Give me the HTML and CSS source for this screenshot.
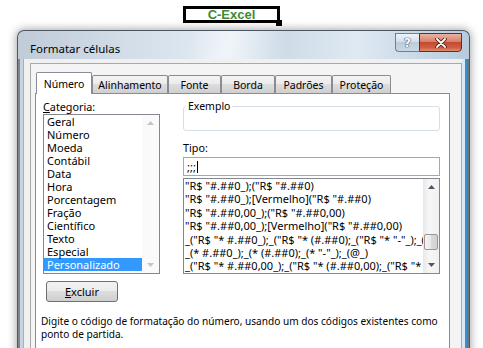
FILE: index.html
```html
<!DOCTYPE html>
<html lang="pt-BR">

<head>
    <meta charset="UTF-8">
    <meta name="viewport" content="width=device-width, initial-scale=1.0">
    <title>C-Excel - Formatar células</title>
    <link rel="stylesheet" href="styles.css">
</head>

<body>
    <div class="cell-ref">C-Excel<span class="handle"></span></div>

    <div class="window">
        <div class="titlebar">
            <span class="title">Formatar células</span>
            <div class="caption-btns">
                <button class="cap-btn help"><span>?</span></button>
                <button class="cap-btn close">
                    <svg width="12" height="10" viewBox="0 0 12 10">
                        <path d="M2 1 L10 9 M10 1 L2 9" stroke="#5a1a10" stroke-width="3.6" stroke-linecap="round" fill="none" />
                        <path d="M2 1 L10 9 M10 1 L2 9" stroke="#fff" stroke-width="1.8" stroke-linecap="round" fill="none" />
                    </svg>
                </button>
            </div>
        </div>

        <div class="client">
            <div class="sheet">
                <div class="tabs">
                    <div class="tab active" style="width: 56px">Número</div>
                    <div class="tab" style="width: 76px">Alinhamento</div>
                    <div class="tab" style="width: 53px">Fonte</div>
                    <div class="tab" style="width: 54px">Borda</div>
                    <div class="tab" style="width: 57px">Padrões</div>
                    <div class="tab" style="width: 59px">Proteção</div>
                </div>

                <div class="panel">
                    <div class="columns">
                        <div class="col-left">
                            <div class="field-label"><u>C</u>ategoria:</div>
                            <div class="listbox categories">
                                <ul class="items">
                                    <li>Geral</li>
                                    <li>Número</li>
                                    <li>Moeda</li>
                                    <li>Contábil</li>
                                    <li>Data</li>
                                    <li>Hora</li>
                                    <li>Porcentagem</li>
                                    <li>Fração</li>
                                    <li>Científico</li>
                                    <li>Texto</li>
                                    <li>Especial</li>
                                    <li class="selected">Personalizado</li>
                                </ul>
                                <div class="vscroll disabled">
                                    <span class="arrow"><svg width="7" height="4" viewBox="0 0 7 4"><path d="M0 4 L3.5 0 L7 4 Z" /></svg></span>
                                    <span class="track"></span>
                                    <span class="arrow"><svg width="7" height="4" viewBox="0 0 7 4"><path d="M0 0 L3.5 4 L7 0 Z" /></svg></span>
                                </div>
                            </div>
                        </div>

                        <div class="col-right">
                            <fieldset class="sample">
                                <legend>Exemplo</legend>
                                <div class="sample-body"></div>
                            </fieldset>
                            <div class="field-label tipo">Tipo:</div>
                            <div class="textbox">;;;<span class="caret"></span></div>
                            <div class="listbox formats">
                                <ul class="items">
                                    <li>"R$ "#.##0_);("R$ "#.##0)</li>
                                    <li>"R$ "#.##0_);[Vermelho]("R$ "#.##0)</li>
                                    <li>"R$ "#.##0,00_);("R$ "#.##0,00)</li>
                                    <li>"R$ "#.##0,00_);[Vermelho]("R$ "#.##0,00)</li>
                                    <li>_("R$ "* #.##0_);_("R$ "* (#.##0);_("R$ "* "-"_);_(@_)</li>
                                    <li>_(* #.##0_);_(* (#.##0);_(* "-"_);_(@_)</li>
                                    <li>_("R$ "* #.##0,00_);_("R$ "* (#.##0,00);_("R$ "* "-"??_);_(@_)</li>
                                </ul>
                                <div class="vscroll">
                                    <span class="arrow"><svg width="7" height="4" viewBox="0 0 7 4"><path d="M0 4 L3.5 0 L7 4 Z" /></svg></span>
                                    <span class="track"><span class="thumb"></span></span>
                                    <span class="arrow"><svg width="7" height="4" viewBox="0 0 7 4"><path d="M0 0 L3.5 4 L7 0 Z" /></svg></span>
                                </div>
                            </div>
                        </div>
                    </div>

                    <button class="btn"><u>E</u>xcluir</button>

                    <p class="hint">Digite o código de formatação do número, usando um dos códigos existentes como<br>ponto de partida.</p>
                </div>
            </div>
        </div>
    </div>
</body>

</html>
```

FILE: styles.css
```css
body {
    margin: 0;
    height: 348px;
    overflow: hidden;
    background: #fff;
    font-family: "Noto Sans", "Open Sans", sans-serif;
    font-size: 11px;
    color: #000;
}

/* selected cell on the sheet */
.cell-ref {
    position: relative;
    width: 91px;
    height: 11px;
    margin: 6px 0 0 183px;
    border: 3px solid #000;
    font-family: "Liberation Sans", Arial, sans-serif;
    font-weight: bold;
    font-size: 13px;
    line-height: 11px;
    text-align: center;
    color: #3d8b33;
}

.handle {
    position: absolute;
    right: -5px;
    bottom: -6px;
    width: 6px;
    height: 6px;
    background: #000;
}

/* dialog window */
.window {
    width: 439px;
    height: 330px;
    margin: 7px 0 0 17px;
    padding: 0 7px 0 5px;
    border: 1px solid #4b5764;
    border-bottom: none;
    border-radius: 7px 7px 0 0;
    box-shadow: 0 0 8px 1px rgba(0, 0, 0, 0.35);
    background:
        linear-gradient(100deg, rgba(255, 255, 255, 0) 38%, rgba(255, 255, 255, 0.5) 47%, rgba(255, 255, 255, 0) 57%) 0 0 / 100% 28px no-repeat,
        linear-gradient(90deg, #bfcbd7 0%, #d3dee9 25%, #e2ebf3 45%, #cfdce8 60%, #dfe9f2 75%, #b7cbde 100%) 0 0 / 100% 28px no-repeat,
        linear-gradient(90deg, #7d868f 0, #7d868f 2px, #c9d3dd 2px, #c9d3dd 5px, #f0f0f0 5px, #f0f0f0 calc(100% - 7px), #dbe7f2 calc(100% - 7px), #dbe7f2 calc(100% - 4px), #3591cc calc(100% - 4px), #3591cc calc(100% - 2px), #6d767f calc(100% - 2px));
}

.titlebar {
    height: 28px;
    display: flex;
    justify-content: space-between;
    align-items: flex-start;
}

.title {
    padding: 10px 0 0 7px;
    font-size: 11.5px;
    line-height: 16px;
}

.caption-btns {
    display: flex;
    margin-top: 2px;
}

.cap-btn {
    height: 19px;
    padding: 0;
    display: flex;
    align-items: center;
    justify-content: center;
}

.cap-btn.help {
    width: 24px;
    border: 1px solid #6f8093;
    border-right: none;
    border-radius: 0 0 0 4px;
    background: linear-gradient(#eef3f8, #d4dfea 45%, #bccbdb 50%, #cad8e6);
}

.cap-btn.help span {
    font-family: "DejaVu Sans", sans-serif;
    font-weight: bold;
    font-size: 12px;
    line-height: 12px;
    color: #fff;
    text-shadow: 0 0 1px #3e5068, 0 0 1px #3e5068, 0 0 1px #3e5068;
}

.cap-btn.close {
    width: 43px;
    border: 1px solid #6b2a1d;
    border-radius: 0 0 4px 0;
    background: linear-gradient(#eab3a4, #d7806a 45%, #c44a30 50%, #cf5f44 80%, #e08c70);
}

/* client area */
.client {
    height: 300px;
    padding: 4px 0 0 6px;
    border-left: 1px solid #a4b0bc;
    background: #f0f0f0;
}

.sheet {
    height: 300px;
    padding: 8px 11px 0 4px;
    border: 1px solid #a9a9a9;
    border-bottom: none;
    background: #f4f4f4;
}

.tabs {
    position: relative;
    z-index: 1;
    display: flex;
    align-items: flex-end;
    height: 22px;
    margin: 0 0 -1px 1px;
}

.tab {
    box-sizing: border-box;
    height: 18px;
    margin-bottom: 1px;
    border: 1px solid #898c95;
    border-bottom: none;
    border-radius: 2px 2px 0 0;
    background: linear-gradient(#f3f3f3, #ebebeb 50%, #dddddd 50%, #cfcfcf);
    display: flex;
    align-items: center;
    justify-content: center;
    font-size: 10.5px;
}

.tab.active {
    height: 22px;
    margin-bottom: 0;
    background: #fff;
}

.panel {
    height: 280px;
    padding: 5px 8px 0 5px;
    border: 1px solid #898c95;
    background: #fff;
}

.columns {
    display: flex;
}

.col-left {
    width: 117px;
    margin-left: 2px;
}

.col-right {
    width: 257px;
    margin-left: 23px;
}

.field-label {
    line-height: 15px;
    font-size: 10.8px;
}

.field-label.tipo {
    margin-top: 9px;
}

/* list boxes */
.listbox {
    display: flex;
    border: 1px solid #828790;
    background: #fff;
}

.listbox .items {
    flex: 1;
    margin: 0;
    padding: 0;
    list-style: none;
    overflow: hidden;
    white-space: nowrap;
}

.categories {
    height: 158px;
}

.categories .items li {
    line-height: 13px;
    padding-left: 3px;
}

.categories .items li.selected {
    background: #3399ff;
    color: #fff;
}

.formats {
    height: 94px;
    margin-top: 2px;
}

.formats .items li {
    line-height: 13.4px;
    padding-left: 1px;
}

.vscroll {
    width: 16px;
    display: flex;
    flex-direction: column;
    background: linear-gradient(90deg, #e8e8e8, #f6f6f6 40%, #f1f1f1);
}

.vscroll.disabled {
    width: 17px;
    background: #fafafa;
}

.vscroll .arrow {
    height: 16px;
    display: flex;
    align-items: center;
    justify-content: center;
}

.vscroll .arrow svg {
    fill: #4f5660;
}

.vscroll.disabled .arrow svg {
    fill: #c4c4c4;
}

.vscroll .track {
    flex: 1;
}

.thumb {
    display: block;
    height: 14px;
    margin: 39px 1px 0 1px;
    border: 1px solid #989898;
    border-radius: 2px;
    background: linear-gradient(90deg, #f4f4f4, #e8e8e8 50%, #dadada 50%, #d2d2d2);
}

/* exemplo group */
.sample {
    margin: 0;
    padding: 0;
    border: 1px solid #d5dfe5;
    border-radius: 3px;
}

.sample legend {
    margin-left: 2px;
    padding: 0 2px;
    font-size: 10.5px;
    line-height: 14px;
}

.sample-body {
    height: 17px;
}

.textbox {
    box-sizing: border-box;
    height: 19px;
    margin-top: 2px;
    padding-left: 3px;
    border: 1px solid #a3a7ae;
    line-height: 17px;
    display: flex;
    align-items: center;
}

.caret {
    display: inline-block;
    width: 1px;
    height: 12px;
    background: #000;
    margin-left: 1px;
}

.btn {
    display: block;
    width: 72px;
    height: 21px;
    margin: 7px 0 0 5px;
    padding: 0;
    border: 1px solid #707070;
    border-radius: 3px;
    background: linear-gradient(#f2f2f2, #ebebeb 50%, #dddddd 50%, #cfcfcf);
    font-family: "Noto Sans", "Open Sans", sans-serif;
    font-size: 11px;
    color: #000;
}

.hint {
    margin: 13px 0 0 0;
    font-size: 10.1px;
    line-height: 13px;
    white-space: nowrap;
}
```
